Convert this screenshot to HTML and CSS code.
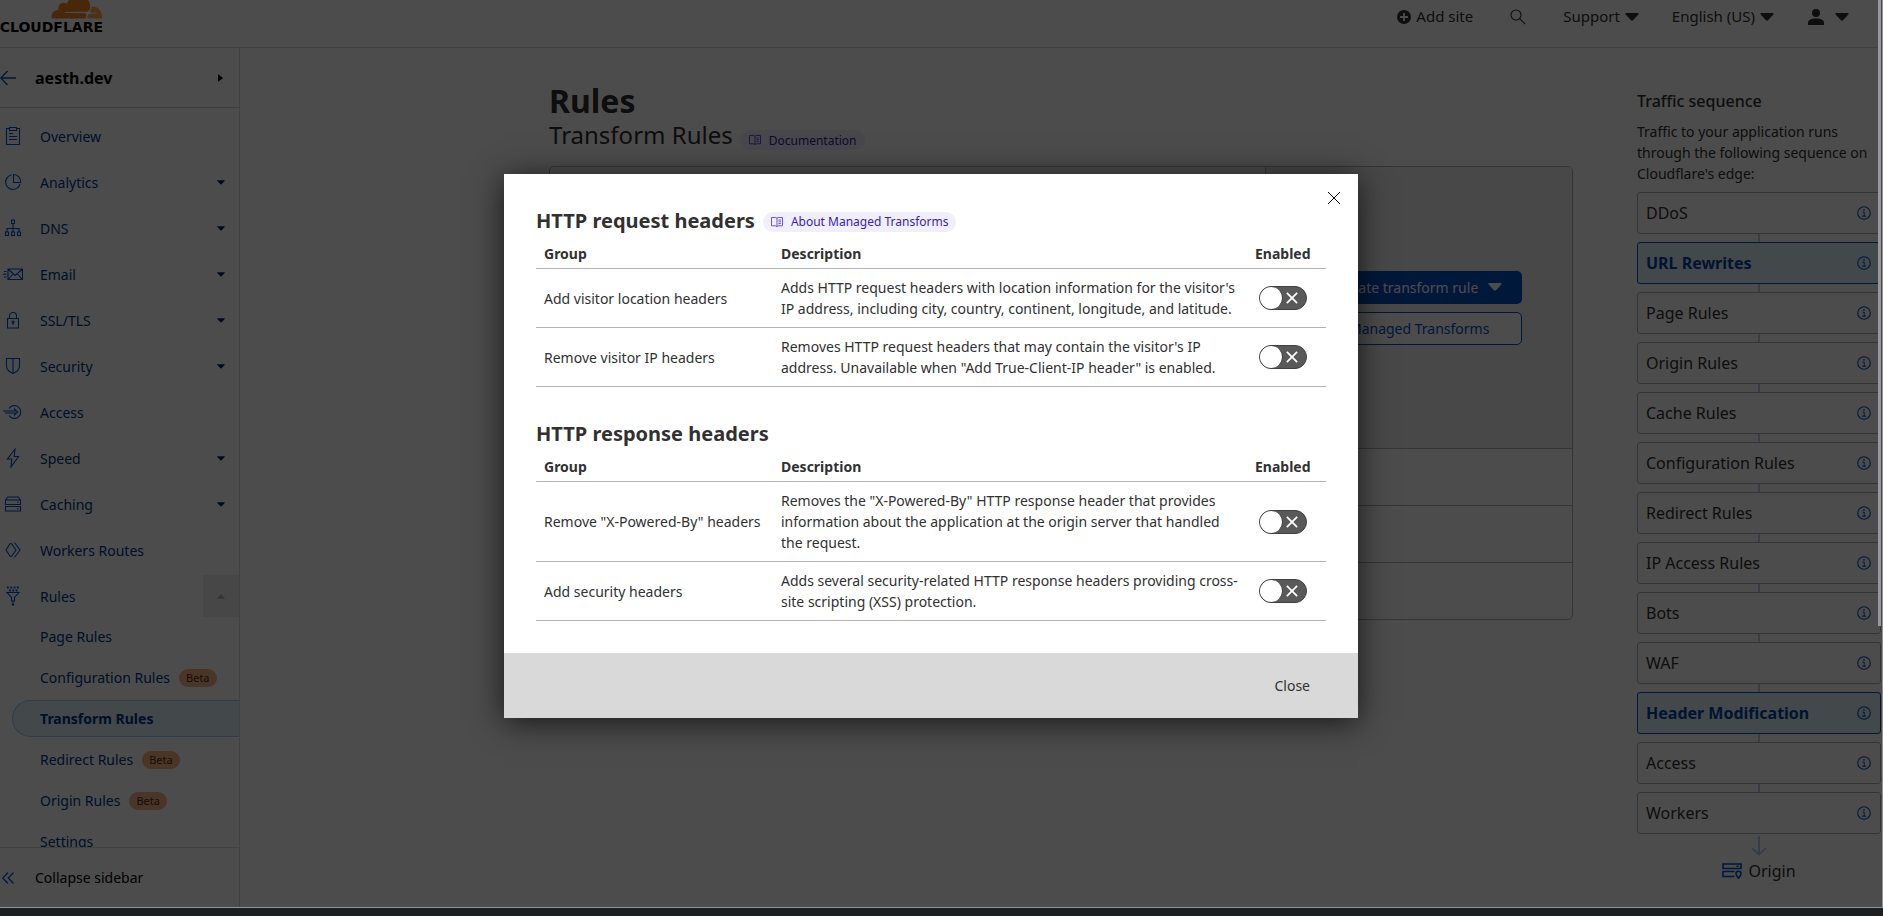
FILE: index.html
```html
<!DOCTYPE html>
<html lang="en">
<head>
<meta charset="utf-8">
<title>Transform Rules | aesth.dev | Cloudflare</title>
<link rel="stylesheet" href="styles.css">
</head>
<body>
<svg class="sprite" aria-hidden="true">
  <symbol id="caret" viewBox="0 0 14 8"><path d="M1.2 0h11.6c.8 0 1.1.9.6 1.4L8 7.2c-.6.6-1.4.6-2 0L.6 1.400C.1.9.4 0 1.200 0z" fill="currentColor"/></symbol>
  <symbol id="info" viewBox="0 0 14 14"><circle cx="7" cy="7" r="6.300" fill="none" stroke="currentColor" stroke-width="1.100"/><path d="M5.500 6.100h1.700v4M5.200 10.200h3.800" fill="none" stroke="currentColor"/><circle cx="7" cy="3.900" r=".8" fill="currentColor"/></symbol>
  <symbol id="book" viewBox="0 0 12 12"><path d="M.5 1.500h4.300L6 2.300l1.200-.8h4.300v8.300H7.200L6 10.600l-1.200-.8H.5zM6 2.300v8.300M7.500 4h2.500M7.500 5.800h2.500M7.500 7.600h2.500" fill="none" stroke="currentColor"/></symbol>
  <symbol id="cross" viewBox="0 0 14 14"><path d="M1 1l12 12M13 1L1 13" fill="none" stroke="currentColor"/></symbol>
</svg>
<div class="frame">
  <header class="topbar">
    <a class="logo" href="#" aria-label="Cloudflare home">
      <svg class="logo-cloud" viewBox="0 0 52 24" aria-hidden="true">
        <path d="M34.500 23.500H.8C-.2 18.500 3 15 7.500 15 6.500 9.500 11 6 16 8.500 18 3 22.500.5 28 .5c7.500 0 12.500 6.500 10.800 13.500-.3 1.500-1.500 2.500-3 2.700l-21.800.3c-.5 0-.5 1 0 1l19.500.2c1.500.1 2.300 1.300 1.800 2.700z" fill="#f6821f"/>
        <path d="M41 11.500c5.800-.8 10.500 4.500 10 12H36.500c-.5-2.500.6-4.500 3-4.700l5.500-.3c.5 0 .5-.8 0-.8l-5-.3c-1.200-.1-1-1.300-.4-2.500z" fill="#fbad41"/>
      </svg>
      <span class="logo-word">CLOUDFLARE</span>
    </a>
    <nav class="top-actions" aria-label="Account">
      <a class="top-item add-site" href="#"><svg class="ico14" viewBox="0 0 14 14" aria-hidden="true"><circle cx="7" cy="7" r="7" fill="currentColor"/><path d="M7 3v8M3 7h8" stroke="#fff" stroke-width="1.800"/></svg>Add site</a>
      <button class="top-item search" type="button" aria-label="Search"><svg class="ico16" viewBox="0 0 16 16" fill="none" stroke="currentColor" stroke-width="1.100" aria-hidden="true"><circle cx="6" cy="6" r="5"/><path d="M9.600 9.600l5.600 5.600"/></svg></button>
      <button class="top-item support" type="button">Support<svg class="caret"><use href="#caret"/></svg></button>
      <button class="top-item language" type="button">English (US)<svg class="caret"><use href="#caret"/></svg></button>
      <button class="top-item user" type="button" aria-label="User menu"><svg class="ico16" viewBox="0 0 16 16" fill="currentColor" aria-hidden="true"><circle cx="8" cy="4" r="4"/><path d="M0 16v-2c0-3 2.500-4.600 8-4.600s8 1.600 8 4.600v2z"/></svg><svg class="caret"><use href="#caret"/></svg></button>
    </nav>
  </header>

  <div class="columns">
    <aside class="sidebar">
      <div class="site">
        <a href="#" aria-label="Back" class="back"><svg class="ico16" viewBox="0 0 16 16" fill="none" stroke="currentColor" stroke-width="1.300" aria-hidden="true"><path d="M16 8H1M7.500 1L.8 8l6.700 7"/></svg></a>
        <button type="button" class="site-name">aesth.dev<svg class="site-caret" viewBox="0 0 5 8" aria-hidden="true"><path d="M0 0l5 4-5 4z" fill="currentColor"/></svg></button>
      </div>
      <nav class="side-nav" aria-label="Site">
        <a class="nav-item" href="#"><svg class="nav-ico" viewBox="0 0 20 20"><path d="M6 2.500H3.500v16h13v-16H14M6.500 1.500h7v3h-7zM6 7.500h4M6 10.500h8M6 13.500h8"/></svg>Overview</a>
        <a class="nav-item" href="#"><svg class="nav-ico" viewBox="0 0 20 20"><path d="M8.500 3A7.300 7.300 0 1 0 17 12M10.500 2.500v8h7.300a7.500 7.500 0 0 0-7.300-8z"/></svg>Analytics<svg class="nav-caret"><use href="#caret"/></svg></a>
        <a class="nav-item" href="#"><svg class="nav-ico" viewBox="0 0 20 20"><path d="M8.500 2h3v3.500h-3zM10 5.500V14M4 14v-3.500h12V14M2.500 14h3v3.500h-3zM8.500 14h3v3.500h-3zM14.500 14h3v3.500h-3z"/></svg>DNS<svg class="nav-caret"><use href="#caret"/></svg></a>
        <a class="nav-item" href="#"><svg class="nav-ico" viewBox="0 0 20 20"><path d="M5 5h14.500v10.500H5zM5 5l7.200 6.500L19.500 5M5 15.500l5-5.500M19.500 15.500l-5-5.500M1 7.500h2.500M0 10.200h3.500M1 13h2.500"/></svg>Email<svg class="nav-caret"><use href="#caret"/></svg></a>
        <a class="nav-item" href="#"><svg class="nav-ico" viewBox="0 0 20 20"><path d="M4.500 8.500h11V18h-11zM6.500 8.500V6a3.500 3.500 0 0 1 7 0v2.500M10 12.500V15"/><circle cx="10" cy="12" r="1"/></svg>SSL/TLS<svg class="nav-caret"><use href="#caret"/></svg></a>
        <a class="nav-item" href="#"><svg class="nav-ico" viewBox="0 0 20 20"><path d="M3.500 2.500h13V10c0 3.500-3 6-6.500 7.500C6.500 16 3.500 13.500 3.500 10zM10 2.500v15"/></svg>Security<svg class="nav-caret"><use href="#caret"/></svg></a>
        <a class="nav-item" href="#"><svg class="nav-ico" viewBox="0 0 20 20"><path d="M6 6.500a6.400 6.400 0 1 1 0 7M0 9h12.500M2 11h12.500M11 6.500l3.500 3.500-3.500 3.500"/></svg>Access</a>
        <a class="nav-item" href="#"><svg class="nav-ico" viewBox="0 0 20 20"><path d="M12 1L4.500 11h4.300L8 19l7.500-10.500h-4.300z"/></svg>Speed<svg class="nav-caret"><use href="#caret"/></svg></a>
        <a class="nav-item" href="#"><svg class="nav-ico" viewBox="0 0 20 20"><path d="M2.500 6l2.200-3h10.600l2.200 3M2.500 6h15v4.500h-15zM2.500 12.500h15V17h-15zM14 14.700h1.500M14 8.200h1.500"/></svg>Caching<svg class="nav-caret"><use href="#caret"/></svg></a>
        <a class="nav-item" href="#"><svg class="nav-ico" viewBox="0 0 20 20"><path d="M7.500 3L3 10l4.500 7M8 3l5 7-5 7M11.500 2.500L17 10l-5.500 7.500"/></svg>Workers Routes</a>
        <a class="nav-item nav-open" href="#"><svg class="nav-ico" viewBox="0 0 20 20"><path d="M4 6.500h12l-4.500 5V15h-3v-3.500zM10 15v5M8.700 18.500h2.600"/><path d="M4 1.500h12M6 4.500h8.500" stroke-width="1.800" stroke-dasharray="1.800 1.500"/></svg>Rules<span class="nav-toggle"><svg class="nav-caret up"><use href="#caret"/></svg></span></a>
        <div class="sub-nav">
          <a class="sub-item" href="#">Page Rules</a>
          <a class="sub-item" href="#">Configuration Rules<span class="beta">Beta</span></a>
          <a class="sub-item current" href="#" aria-current="page">Transform Rules</a>
          <a class="sub-item" href="#">Redirect Rules<span class="beta">Beta</span></a>
          <a class="sub-item" href="#">Origin Rules<span class="beta">Beta</span></a>
          <a class="sub-item" href="#">Settings</a>
        </div>
      </nav>
      <button class="collapse" type="button"><svg class="ico14" viewBox="0 0 14 14" fill="none" stroke="currentColor" stroke-width="1.200" aria-hidden="true"><path d="M6 1.500L.8 7 6 12.500M11.500 1.500L6.300 7l5.200 5.500"/></svg>Collapse sidebar</button>
    </aside>

    <main class="content">
      <h1 class="title">Rules</h1>
      <div class="subtitle-row">
        <h2 class="subtitle">Transform Rules</h2>
        <a class="doc-link" href="#"><svg class="doc-ico"><use href="#book"/></svg>Documentation</a>
      </div>
      <section class="card">
        <div class="card-top">
          <div></div>
          <div class="card-actions">
            <button class="btn btn-primary" type="button">Create transform rule<svg class="caret"><use href="#caret"/></svg></button>
            <button class="btn btn-outline" type="button">Managed Transforms</button>
          </div>
        </div>
        <div class="card-row"></div>
        <div class="card-row"></div>
        <div class="card-row"></div>
      </section>
    </main>

    <aside class="traffic">
      <h3 class="traffic-title">Traffic sequence</h3>
      <p class="traffic-text">Traffic to your application runs through the following sequence on Cloudflare's edge:</p>
      <ol class="steps">
        <li class="step">DDoS<svg class="ico14"><use href="#info"/></svg></li>
        <li class="step active">URL Rewrites<svg class="ico14"><use href="#info"/></svg></li>
        <li class="step">Page Rules<svg class="ico14"><use href="#info"/></svg></li>
        <li class="step">Origin Rules<svg class="ico14"><use href="#info"/></svg></li>
        <li class="step">Cache Rules<svg class="ico14"><use href="#info"/></svg></li>
        <li class="step">Configuration Rules<svg class="ico14"><use href="#info"/></svg></li>
        <li class="step">Redirect Rules<svg class="ico14"><use href="#info"/></svg></li>
        <li class="step">IP Access Rules<svg class="ico14"><use href="#info"/></svg></li>
        <li class="step">Bots<svg class="ico14"><use href="#info"/></svg></li>
        <li class="step">WAF<svg class="ico14"><use href="#info"/></svg></li>
        <li class="step active">Header Modification<svg class="ico14"><use href="#info"/></svg></li>
        <li class="step">Access<svg class="ico14"><use href="#info"/></svg></li>
        <li class="step">Workers<svg class="ico14"><use href="#info"/></svg></li>
      </ol>
      <svg class="down" viewBox="0 0 16 20" aria-hidden="true"><path d="M8 0v18M1 12l7 6.500 7-6.500" fill="none" stroke="currentColor" stroke-width="2"/></svg>
      <div class="origin"><svg class="origin-ico" viewBox="0 0 20 16" fill="none" stroke="currentColor" stroke-width="1.600" aria-hidden="true"><path d="M1 1h18v4.500H1zM12.500 13.500H1V8.500h11.500M14.500 3.200h2"/><path d="M16.500 15.200c-1.500-1.800-2.500-3-2.500-4.400a2.500 2.500 0 0 1 5 0c0 1.400-1 2.600-2.500 4.400z"/></svg>Origin</div>
    </aside>
  </div>

  <div class="overlay">
    <div class="modal" role="dialog" aria-modal="true" aria-labelledby="request-title">
      <button class="dismiss" type="button" aria-label="Close dialog"><svg class="dismiss-ico"><use href="#cross"/></svg></button>
      <div class="modal-body">
        <section class="group">
          <div class="group-head">
            <h2 class="group-title" id="request-title">HTTP request headers</h2>
            <a class="doc-link" href="#"><svg class="doc-ico"><use href="#book"/></svg>About Managed Transforms</a>
          </div>
          <table class="transforms">
            <thead><tr><th scope="col" class="c-group">Group</th><th scope="col" class="c-desc">Description</th><th scope="col" class="c-on">Enabled</th></tr></thead>
            <tbody>
              <tr><td>Add visitor location headers</td><td>Adds HTTP request headers with location information for the visitor's IP address, including city, country, continent, longitude, and latitude.</td><td><label class="toggle"><input type="checkbox" aria-label="Add visitor location headers"><svg class="toggle-x"><use href="#cross"/></svg></label></td></tr>
              <tr><td>Remove visitor IP headers</td><td>Removes HTTP request headers that may contain the visitor's IP address. Unavailable when "Add True-Client-IP header" is enabled.</td><td><label class="toggle"><input type="checkbox" aria-label="Remove visitor IP headers"><svg class="toggle-x"><use href="#cross"/></svg></label></td></tr>
            </tbody>
          </table>
        </section>
        <section class="group">
          <div class="group-head"><h2 class="group-title">HTTP response headers</h2></div>
          <table class="transforms">
            <thead><tr><th scope="col" class="c-group">Group</th><th scope="col" class="c-desc">Description</th><th scope="col" class="c-on">Enabled</th></tr></thead>
            <tbody>
              <tr><td>Remove "X-Powered-By" headers</td><td>Removes the "X-Powered-By" HTTP response header that provides information about the application at the origin server that handled the request.</td><td><label class="toggle"><input type="checkbox" aria-label="Remove X-Powered-By headers"><svg class="toggle-x"><use href="#cross"/></svg></label></td></tr>
              <tr><td>Add security headers</td><td>Adds several security-related HTTP response headers providing cross-site scripting (XSS) protection.</td><td><label class="toggle"><input type="checkbox" aria-label="Add security headers"><svg class="toggle-x"><use href="#cross"/></svg></label></td></tr>
            </tbody>
          </table>
        </section>
      </div>
      <footer class="modal-foot"><button class="close-btn" type="button">Close</button></footer>
    </div>
  </div>
  <div class="scroll-thumb"></div>
</div>
<div class="desktop"></div>
</body>
</html>
```
FILE: styles.css
```css
* { box-sizing: border-box; }
body {
  margin: 0;
  height: 100vh;
  display: flex;
  flex-direction: column;
  overflow: hidden;
  font: 14px/21px "Noto Sans", "Open Sans", sans-serif;
  color: #313131;
  background: #1b1f21;
}
h1, h2, h3, p, ol { margin: 0; padding: 0; }
a { color: inherit; text-decoration: none; }
button { font: inherit; color: inherit; background: none; border: 0; padding: 0; }
svg { flex: none; }
.sprite { display: none; }
.ico14 { width: 14px; height: 14px; }
.ico16 { width: 16px; height: 16px; }
.caret { width: 14px; height: 8px; }

.frame {
  position: relative;
  flex: 1;
  min-height: 0;
  display: flex;
  flex-direction: column;
  background: #fff;
  border: solid #929292;
  border-width: 0 1px 1px 0;
}
.desktop { height: 8px; background: #1b1f21; }

/* top bar */
.topbar {
  display: flex;
  justify-content: space-between;
  align-items: flex-start;
  height: 48px;
  border-bottom: 1px solid #d9d9d9;
}
.logo { display: flex; flex-direction: column; align-items: flex-end; width: 103px; margin-top: -5px; color: #000; }
.logo-cloud { width: 52px; height: 24px; }
.logo-word { font: 700 14px/16px "DejaVu Sans", sans-serif; }
.top-actions { display: flex; align-items: center; height: 33px; padding-right: 33px; font-size: 15px; }
.top-item { display: flex; align-items: center; gap: 5px; }
.add-site { margin-right: 37px; }
.search { margin-right: 37px; }
.support { margin-right: 33px; }
.language { margin-right: 34px; }
.user { gap: 11px; }

.columns { flex: 1; min-height: 0; display: flex; }

/* sidebar */
.sidebar { display: flex; flex-direction: column; width: 240px; flex: none; border-right: 1px solid #d9d9d9; }
.site { display: flex; align-items: center; gap: 19px; height: 60px; flex: none; border-bottom: 1px solid #d9d9d9; }
.back { display: flex; color: #0051c3; }
.site-name { flex: 1; display: flex; justify-content: space-between; align-items: center; padding-right: 16px; font-size: 16px; line-height: 24px; font-weight: 700; color: #000; }
.site-caret { width: 5px; height: 8px; }
.side-nav { flex: 1; min-height: 0; overflow: hidden; display: flex; flex-direction: column; gap: 4px; padding-top: 7px; color: #003681; }
.nav-item { display: flex; align-items: center; flex: none; height: 42px; padding: 0 14px 0 3px; }
.nav-ico { width: 20px; height: 20px; margin-right: 17px; fill: none; stroke: #0051c3; stroke-width: 1.1; }
.nav-caret { width: 8px; height: 5px; margin-left: auto; color: #002457; }
.nav-item.nav-open { padding-right: 0; }
.nav-toggle { display: grid; place-items: center; width: 36px; height: 42px; margin-left: auto; background: #ededed; }
.nav-caret.up { margin: 0; color: #b0b0b8; transform: rotate(180deg); }
.sub-nav { display: flex; flex-direction: column; gap: 4px; margin-top: -3px; flex: none; }
.sub-item { display: flex; align-items: center; gap: 9px; height: 37px; margin-left: 12px; padding-left: 28px; }
.sub-item.current { border: 1px solid #a8c6f5; border-right: 0; border-radius: 19px 0 0 19px; padding-left: 27px; background: #e2f0f8; font-weight: 700; }
.beta { padding: 0 7px; border-radius: 9px; background: #f6b48a; color: #5c2a06; font-size: 11px; line-height: 18px; }
.collapse { display: flex; align-items: center; gap: 19px; flex: none; height: 60px; padding-left: 2px; border-top: 1px solid #d9d9d9; color: #000; }
.collapse svg { color: #0051c3; }

/* main */
.content { flex: 1; max-width: 1024px; margin: 33px 64px 0 auto; }
.title { font-size: 32px; line-height: 40px; font-weight: 700; }
.subtitle-row { display: flex; align-items: flex-end; gap: 8px; height: 30px; margin-bottom: 15px; }
.subtitle-row .doc-link { margin-bottom: 1px; }
.subtitle { font-size: 24px; line-height: 32px; font-weight: 400; }
.doc-link { display: flex; align-items: center; gap: 8px; height: 20px; padding: 0 8px; border-radius: 10px; background: #f1eefe; color: #3b1fa8; font-size: 12px; }
.doc-ico { width: 12px; height: 12px; color: #6d52e0; }
.card { border: 1px solid #b3b3b3; border-radius: 5px; overflow: hidden; }
.card-top { display: grid; grid-template-columns: 7fr 3fr; height: 281px; }
.card-actions { display: flex; flex-direction: column; justify-content: center; gap: 8px; padding: 0 50px; background: #f2f2f2; border-left: 1px solid #b3b3b3; }
.card-row { height: 57px; border-top: 1px solid #b3b3b3; }
.btn { display: flex; align-items: center; justify-content: center; gap: 10px; height: 33px; border-radius: 5px; white-space: nowrap; }
.btn-primary { background: #0051c3; color: #fff; }
.btn-outline { border: 1px solid #0051c3; background: #fff; color: #0051c3; }

/* traffic sequence */
.traffic { width: 244px; flex: none; margin: 41px 1px 0 0; }
.traffic-title { font-size: 16px; line-height: 24px; font-weight: 500; }
.traffic-text { margin: 8px 0; }
.steps { display: flex; flex-direction: column; gap: 8px; list-style: none; font-size: 16px; background: linear-gradient(#b9cdec, #b9cdec) center / 2px 100% no-repeat; }
.step { display: flex; align-items: center; justify-content: space-between; height: 42px; padding: 0 9px 0 8px; border: 1px solid #b3b3b3; border-radius: 3px; background: #fff; }
.step svg { color: #0051c3; }
.step.active { border-color: #0051c3; background: #e2f0f8; color: #0045a6; font-weight: 700; }
.down { display: block; width: 16px; height: 20px; margin: 2px auto 3px; color: #b9cdec; }
.origin { display: flex; align-items: center; justify-content: center; gap: 6px; font-size: 16px; line-height: 24px; }
.origin-ico { width: 20px; height: 16px; color: #0051c3; }

/* dialog */
.overlay { position: absolute; inset: 0; display: flex; align-items: center; justify-content: center; padding: 0 20px 15px 0; background: rgba(0, 0, 0, 0.7); }
.modal { position: relative; width: 854px; background: #fff; box-shadow: 0 4px 30px rgba(0, 0, 0, 0.7); }
.dismiss { position: absolute; top: 16px; right: 16px; display: grid; place-items: center; width: 16px; height: 16px; color: #000; }
.dismiss-ico { width: 14px; height: 14px; }
.modal-body { display: flex; flex-direction: column; gap: 32px; padding: 32px; }
.group-head { display: flex; align-items: center; gap: 8px; height: 29px; }
.group-head .doc-link { margin-top: 2px; }
.group-title { font-size: 20px; line-height: 28px; font-weight: 700; }
.transforms { width: 100%; border-collapse: separate; border-spacing: 0; table-layout: fixed; text-align: left; }
.c-group { width: 30%; }
.c-desc { width: 60%; }
.c-on { width: 10%; }
.transforms th, .transforms td { padding: 8px; border-bottom: 1px solid #b3b3b3; }
.transforms th { padding-bottom: 4px; font-weight: 700; }
.toggle { display: grid; align-items: center; width: 48px; height: 24px; margin-left: 4px; }
.toggle input { grid-area: 1 / 1; appearance: none; width: 48px; height: 24px; margin: 0; padding: 0; border: 1px solid #404040; border-radius: 12px; background: #595959; }
.toggle input::before { content: ""; display: block; width: 22px; height: 22px; border-radius: 50%; background: #fff; border: 1px solid #404040; border-width: 0 1px 0 0; }
.toggle-x { grid-area: 1 / 1; width: 12px; height: 12px; margin-left: 27px; color: #fff; stroke-width: 2; pointer-events: none; }
.modal-foot { display: flex; justify-content: flex-end; align-items: center; height: 65px; padding: 0 32px; background: #d9d9d9; }
.close-btn { height: 33px; padding: 0 16px; }

.scroll-thumb { position: absolute; top: 0; right: 1px; width: 3px; height: 626px; background: #98979c; }
```
